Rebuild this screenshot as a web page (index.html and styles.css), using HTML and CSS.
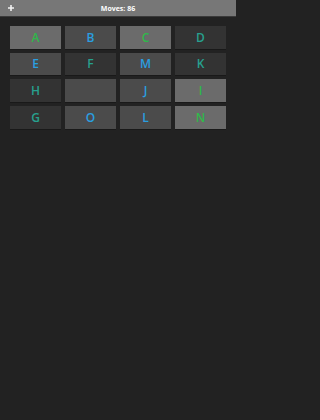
FILE: index.html
```html
<!DOCTYPE html>
<html>
<head>
<meta charset="utf-8">
<link rel="stylesheet" href="styles.css">
</head>
<body>
<div class="app">
<header class="topbar">
  <span class="menu-icon">
    <svg width="6" height="6" viewBox="0 0 6 6"><path d="M2.2 0h1.6v2.2H6v1.6H3.8V6H2.2V3.8H0V2.2h2.2z" fill="#f2f2f2"/></svg>
  </span>
  <span class="moves">Moves: 86</span>
</header>
<main class="board">
  <div class="tile light green">A</div>
  <div class="tile mid blue">B</div>
  <div class="tile light green">C</div>
  <div class="tile dark teal">D</div>
  <div class="tile mid blue">E</div>
  <div class="tile dark teal">F</div>
  <div class="tile mid blue">M</div>
  <div class="tile dark teal">K</div>
  <div class="tile dark teal">H</div>
  <div class="tile mid empty"></div>
  <div class="tile mid blue">J</div>
  <div class="tile light green">I</div>
  <div class="tile dark teal">G</div>
  <div class="tile mid blue">O</div>
  <div class="tile mid blue">L</div>
  <div class="tile light green">N</div>
</main>
</div>
</body>
</html>
```
FILE: styles.css
```css
html, body {
  margin: 0;
  padding: 0;
  background: #222222;
  height: 100%;
}
body {
  font-family: "Open Sans", "Noto Sans", sans-serif;
}
.app {
  width: 236px;
  min-height: 420px;
  background: #222222;
}
.topbar {
  position: relative;
  height: 16px;
  background: #777777;
  border-bottom: 1px solid #3a3a3a;
  display: flex;
  align-items: center;
  justify-content: center;
}
.menu-icon {
  position: absolute;
  left: 8px;
  top: 5px;
  width: 6px;
  height: 6px;
  display: block;
}
.menu-icon svg { display: block; }
.moves {
  color: #ffffff;
  font-size: 7px;
  font-weight: 700;
  line-height: 1;
}
.board {
  display: grid;
  grid-template-columns: repeat(4, 51px);
  grid-auto-rows: 22.67px;
  column-gap: 4px;
  row-gap: 4px;
  padding: 9px 10px 0 10px;
}
.tile {
  display: flex;
  align-items: center;
  justify-content: center;
  font-size: 12px;
  font-weight: 600;
  box-shadow: 0 1px 0 rgba(0,0,0,0.25);
}
.light { background: #6b6b6b; }
.mid { background: #4b4b4b; }
.dark { background: #333333; }
.green { color: #2fb84a; }
.blue { color: #2a9fe0; }
.teal { color: #27a08e; }
```
